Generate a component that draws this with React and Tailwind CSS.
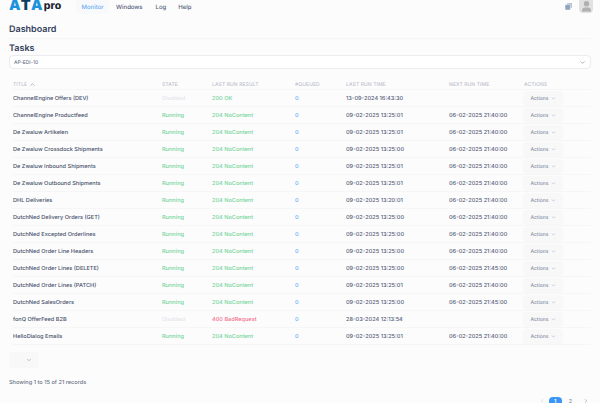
import { ChevronDown, ChevronUp, ChevronLeft, ChevronRight, User } from 'lucide-react'

const rows = [
  ['ChannelEngine Offers (DEV)', 'Disabled', '200 OK', '13-09-2024 16:43:30', ''],
  ['ChannelEngine Productfeed', 'Running', '204 NoContent', '09-02-2025 13:25:01', '06-02-2025 21:40:00'],
  ['De Zwaluw Artikelen', 'Running', '204 NoContent', '09-02-2025 13:25:01', '06-02-2025 21:40:00'],
  ['De Zwaluw Crossdock Shipments', 'Running', '204 NoContent', '09-02-2025 13:25:00', '06-02-2025 21:40:00'],
  ['De Zwaluw Inbound Shipments', 'Running', '204 NoContent', '09-02-2025 13:25:01', '06-02-2025 21:40:00'],
  ['De Zwaluw Outbound Shipments', 'Running', '204 NoContent', '09-02-2025 13:25:01', '06-02-2025 21:40:00'],
  ['DHL Deliveries', 'Running', '204 NoContent', '09-02-2025 13:20:01', '06-02-2025 21:40:00'],
  ['DutchNed Delivery Orders (GET)', 'Running', '204 NoContent', '09-02-2025 13:25:00', '06-02-2025 21:40:00'],
  ['DutchNed Excepted Orderlines', 'Running', '204 NoContent', '09-02-2025 13:25:00', '06-02-2025 21:40:00'],
  ['DutchNed Order Line Headers', 'Running', '204 NoContent', '09-02-2025 13:25:00', '06-02-2025 21:40:00'],
  ['DutchNed Order Lines (DELETE)', 'Running', '204 NoContent', '09-02-2025 13:25:00', '06-02-2025 21:45:00'],
  ['DutchNed Order Lines (PATCH)', 'Running', '204 NoContent', '09-02-2025 13:25:01', '06-02-2025 21:40:00'],
  ['DutchNed SalesOrders', 'Running', '204 NoContent', '09-02-2025 13:25:00', '06-02-2025 21:45:00'],
  ['fonQ OfferFeed B2B', 'Disabled', '400 BadRequest', '28-03-2024 12:13:54', ''],
  ['HelloDialog Emails', 'Running', '204 NoContent', '09-02-2025 13:25:01', '06-02-2025 21:40:00'],
]

const gridCols = 'grid grid-cols-[149px_50px_83px_51px_103px_75px_67px] items-center'

function resultColor(result) {
  return result.startsWith('400') ? 'text-[#f2708c]' : 'text-[#72d49a]'
}

export default function App() {
  return (
    <div className="h-[403px] w-[600px] overflow-hidden bg-[#fcfcfd] font-['Inter',sans-serif] text-[5.6px] text-[#3a4560] [text-rendering:geometricPrecision]">
      <header className="flex h-[14px] items-center pl-[9px] pr-[7px]">
        <div className="flex h-full w-[67px] items-end pb-[3px] text-[14.5px] font-black leading-[10px] tracking-[0.2px]">
          <span className="text-[#1c93dc]">A</span>
          <span className="text-[#0d3f66]">T</span>
          <span className="text-[#1c93dc]">A</span>
          <span className="ml-px text-[10.5px] font-extrabold text-[#1d2433]">pro</span>
        </div>
        <nav className="flex h-full items-center text-[6px] font-medium text-[#566079]">
          <span className="flex h-full w-[33px] items-center justify-center rounded-b-sm bg-[#f8f9fa] text-[#6aaef5]">Monitor</span>
          <span className="ml-[7px]">Windows</span>
          <span className="ml-[13px]">Log</span>
          <span className="ml-[12px]">Help</span>
        </nav>
        <svg viewBox="0 0 7 7" className="ml-auto h-[7px] w-[7px] -translate-y-px">
          <rect x="2" y="0" width="5" height="5" rx="0.8" fill="#b7c4d6" />
          <rect x="0" y="1.6" width="5.4" height="5.4" rx="0.8" fill="#8fa3bd" stroke="#fcfcfd" strokeWidth="0.5" />
        </svg>
        <div className="ml-[7px] flex h-[13px] w-[14px] items-end justify-center self-start overflow-hidden rounded-b-sm bg-[#e2e2e2]">
          <User className="h-[13px] w-[13px] fill-[#b0b0b0] text-[#b0b0b0]" />
        </div>
      </header>

      <main className="px-[9px]">
        <h1 className="mt-[10px] border-b border-[#f5f5f6] pb-[2px] text-[9px] font-semibold leading-[12px] text-[#33405a]">Dashboard</h1>
        <h2 className="mt-[4px] text-[9px] font-semibold leading-[12px] text-[#33405a]">Tasks</h2>
        <div className="flex h-[14px] items-center justify-between rounded-sm border border-[#ececef] bg-white px-[4px] text-[5px] text-[#566079]">
          <span className="pt-[3px]">AP-EDI-10</span>
          <ChevronDown className="h-[7px] w-[7px] text-[#7b859c]" />
        </div>

        <section className="mt-[10px] pl-[4px]">
          <div className={`${gridCols} h-[11px] border-b border-[#f6f6f7] text-[5px] font-medium uppercase tracking-[0.1px] text-[#bcc0cb]`}>
            <span className="flex items-center gap-[2px] pt-[2px]">Title <ChevronUp className="mb-[2px] h-[7px] w-[7px] text-[#8089a0]" /></span>
            <span className="pt-[2px]">State</span>
            <span className="pt-[2px]">Last run result</span>
            <span className="pt-[2px]">#Queued</span>
            <span className="pt-[2px]">Last run time</span>
            <span className="pt-[2px]">Next run time</span>
            <span className="pt-[2px]">Actions</span>
          </div>
          {rows.map(([title, state, result, last, next]) => (
            <div key={title} className={`${gridCols} h-[17px] border-b border-[#f6f6f7] font-medium`}>
              <span className="pt-[2px] text-[#46516a]">{title}</span>
              <span className={`pt-[2px] ${state === 'Disabled' ? 'text-[#e4e6eb]' : 'text-[#72d49a]'}`}>{state}</span>
              <span className={`pt-[2px] ${resultColor(result)}`}>{result}</span>
              <span className="pt-[2px] text-[#6aaef5]">0</span>
              <span className="pt-[2px] text-[#566079]">{last}</span>
              <span className="pt-[2px] text-[#566079]">{next}</span>
              <span className="-ml-[1px] flex h-[15px] w-[40px] items-center justify-center gap-[2px] rounded-sm bg-[#f8f8f9] text-[5px] text-[#8a92a6]">
                <span className="pt-[3px]">Actions</span> <ChevronDown className="h-[5px] w-[5px]" />
              </span>
            </div>
          ))}
        </section>

        <div className="mt-[7px] flex h-[16px] w-[30px] items-center justify-end rounded-sm bg-[#f8f8f9] pr-[7px]">
          <ChevronDown className="h-[6px] w-[6px] text-[#7b859c]" />
        </div>
        <p className="mt-[10px] text-[5.6px] font-medium leading-[10px] text-[#6a7386]">Showing 1 to 15 of 21 records</p>
        <div className="mt-[9px] flex items-start justify-end pr-[2px] text-[5.5px] text-[#7b859c]">
          <ChevronLeft className="mt-[1px] h-[6px] w-[6px] text-[#c4c8d2]" />
          <span className="ml-[4px] flex h-[14px] w-[13px] justify-center rounded-sm bg-[#3b95f5] pt-[1px] font-semibold text-white">1</span>
          <span className="ml-[7px] pt-[1px]">2</span>
          <ChevronRight className="ml-[11px] mt-[1px] h-[6px] w-[6px]" />
        </div>
      </main>
    </div>
  )
}
